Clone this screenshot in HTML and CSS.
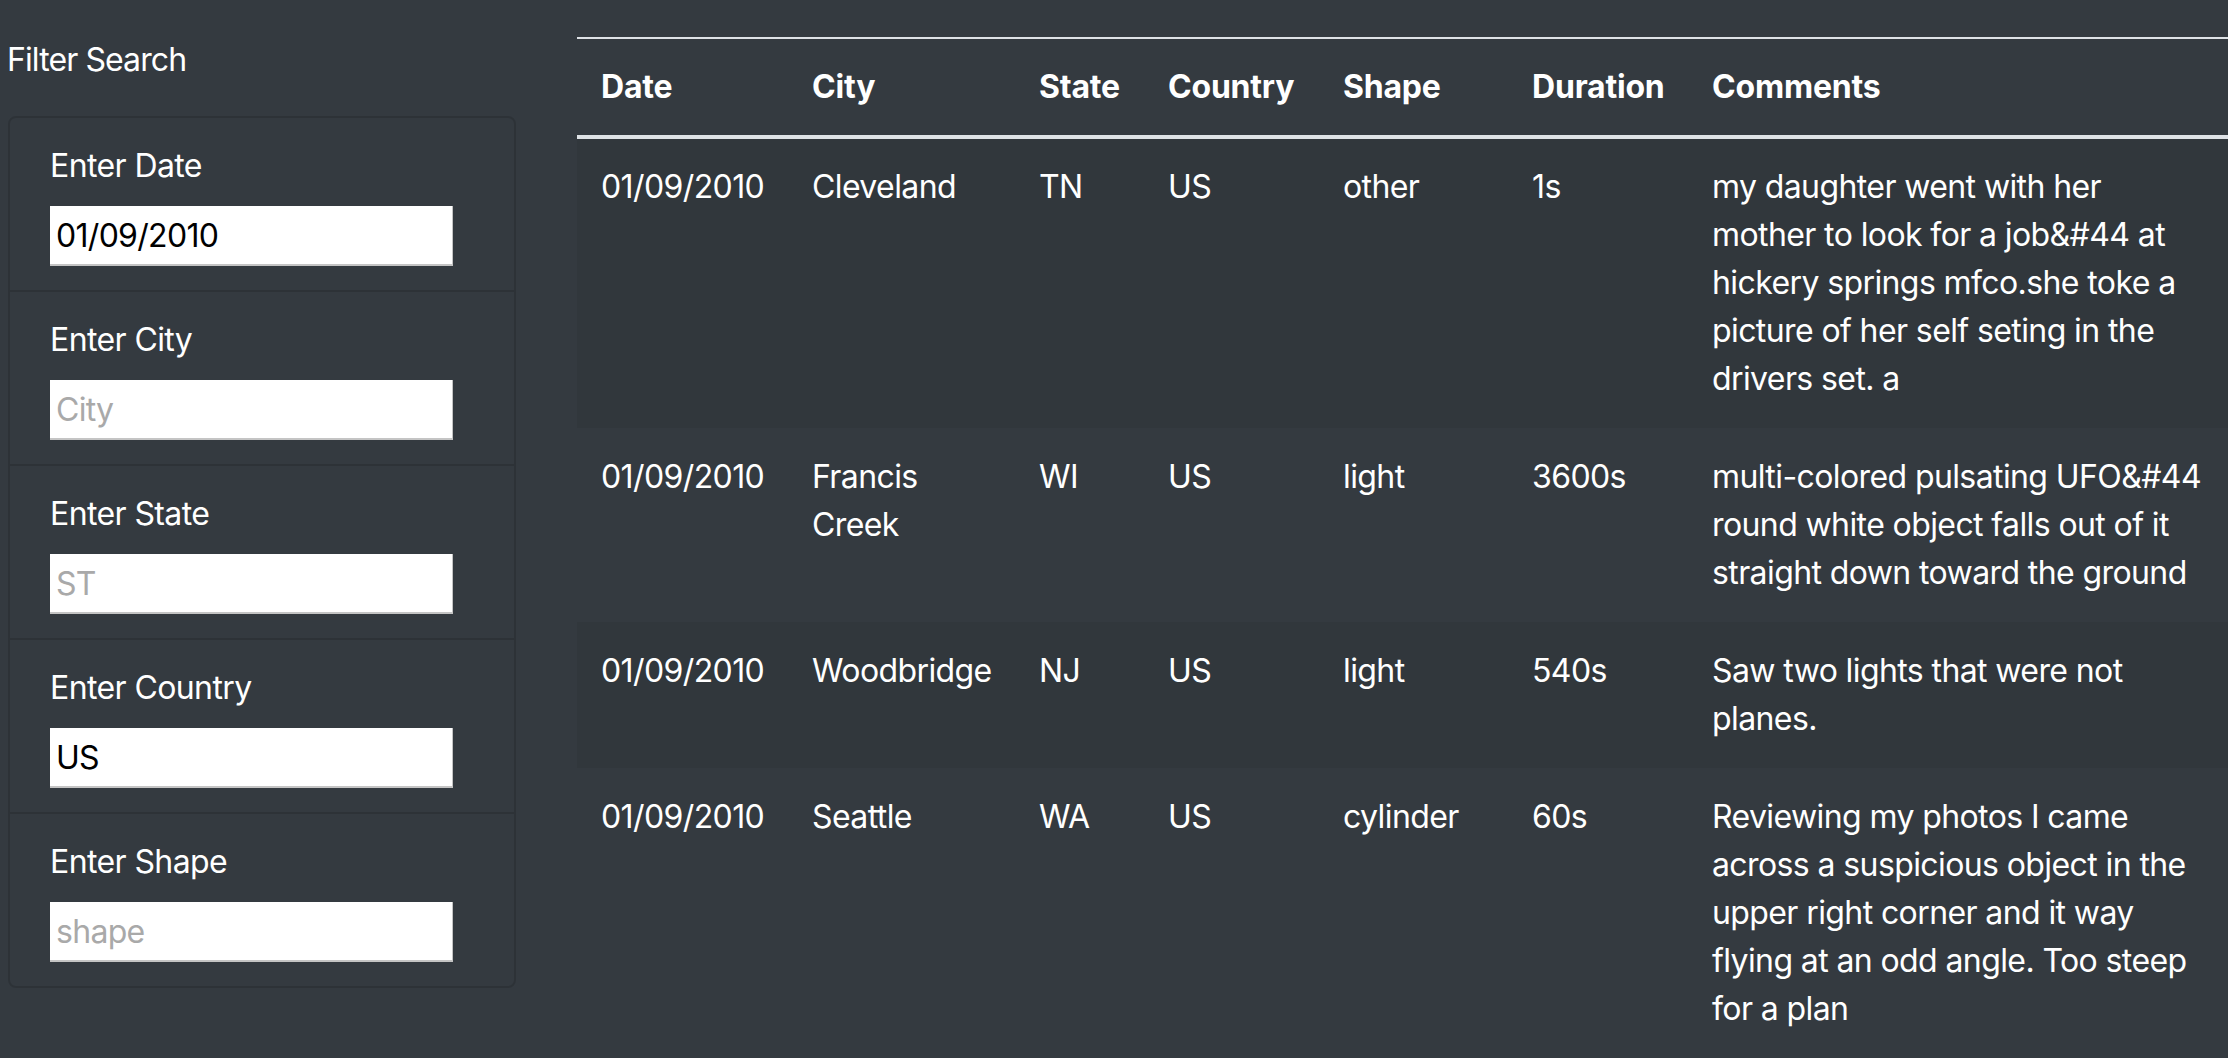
FILE: index.html
```html
<!DOCTYPE html>
<html lang="en">
<head>
<meta charset="utf-8">
<title>UFO Sightings</title>
<link rel="stylesheet" href="styles.css">
</head>
<body>
<div class="layout">
  <aside class="sidebar">
    <h5 class="filter-title">Filter Search</h5>
    <ul class="filters">
      <li class="filter-item">
        <label class="filter-label" for="datetime">Enter Date</label>
        <input class="filter-input" id="datetime" type="text" value="01/09/2010">
      </li>
      <li class="filter-item">
        <label class="filter-label" for="city">Enter City</label>
        <input class="filter-input" id="city" type="text" placeholder="City">
      </li>
      <li class="filter-item">
        <label class="filter-label" for="state">Enter State</label>
        <input class="filter-input" id="state" type="text" placeholder="ST">
      </li>
      <li class="filter-item">
        <label class="filter-label" for="country">Enter Country</label>
        <input class="filter-input" id="country" type="text" value="US">
      </li>
      <li class="filter-item">
        <label class="filter-label" for="shape">Enter Shape</label>
        <input class="filter-input" id="shape" type="text" placeholder="shape">
      </li>
    </ul>
  </aside>
  <main class="content">
    <table class="ufo-table">
      <colgroup>
        <col class="c-date">
        <col class="c-city">
        <col class="c-state">
        <col class="c-country">
        <col class="c-shape">
        <col class="c-duration">
        <col class="c-comments">
      </colgroup>
      <thead>
        <tr>
          <th>Date</th>
          <th>City</th>
          <th>State</th>
          <th>Country</th>
          <th>Shape</th>
          <th>Duration</th>
          <th>Comments</th>
        </tr>
      </thead>
      <tbody>
        <tr>
          <td>01/09/2010</td>
          <td>Cleveland</td>
          <td>TN</td>
          <td>US</td>
          <td>other</td>
          <td>1s</td>
          <td>my daughter went with her mother to look for a job&amp;#44 at hickery springs mfco.she toke a picture of her self seting in the drivers set. a</td>
        </tr>
        <tr>
          <td>01/09/2010</td>
          <td>Francis Creek</td>
          <td>WI</td>
          <td>US</td>
          <td>light</td>
          <td>3600s</td>
          <td>multi-colored pulsating UFO&amp;#44 round white object falls out of it straight down toward the ground</td>
        </tr>
        <tr>
          <td>01/09/2010</td>
          <td>Woodbridge</td>
          <td>NJ</td>
          <td>US</td>
          <td>light</td>
          <td>540s</td>
          <td>Saw two lights that were not planes.</td>
        </tr>
        <tr>
          <td>01/09/2010</td>
          <td>Seattle</td>
          <td>WA</td>
          <td>US</td>
          <td>cylinder</td>
          <td>60s</td>
          <td>Reviewing my photos I came across a suspicious object in the upper right corner and it way flying at an odd angle. Too steep for a plan</td>
        </tr>
      </tbody>
    </table>
  </main>
</div>
</body>
</html>
```

FILE: styles.css
```css
html, body {
  margin: 0;
  padding: 0;
}

body {
  background: #343a40;
  color: #fff;
  font-family: Inter, "Noto Sans", "Liberation Sans", sans-serif;
  font-size: 32px;
  line-height: 48px;
  letter-spacing: -0.6px;
  overflow: hidden;
}

.layout {
  display: flex;
  align-items: flex-start;
}

.sidebar {
  flex: 0 0 577px;
  box-sizing: border-box;
  padding-left: 8px;
}

.filter-title {
  margin: 36px 0 32px -1px;
  font-size: 32px;
  font-weight: 400;
  line-height: 48px;
  letter-spacing: -0.9px;
}

.filters {
  list-style: none;
  margin: 0;
  padding: 0;
  width: 508px;
  box-sizing: border-box;
  border: 2px solid rgba(0, 0, 0, 0.13);
  border-radius: 8px;
}

.filter-item {
  display: flex;
  flex-direction: column;
  align-items: flex-start;
  padding: 24px 40px;
  border-top: 2px solid rgba(0, 0, 0, 0.13);
}

.filter-item:first-child {
  border-top: 0;
}

.filter-label {
  display: block;
  margin-bottom: 16px;
  line-height: 48px;
}

.filter-input {
  box-sizing: border-box;
  width: 403px;
  height: 60px;
  margin: 0;
  padding: 0 6px;
  border-style: solid;
  border-width: 0 1px 2px 0;
  border-color: #c4c4c4;
  border-radius: 0;
  background: #fff;
  color: #000;
  font-family: Inter, "Noto Sans", "Liberation Sans", sans-serif;
  font-size: 32px;
  letter-spacing: -0.7px;
  outline: none;
}

.filter-input::placeholder {
  color: #a9a9a9;
}

.content {
  flex: 1 1 auto;
  min-width: 0;
}

.ufo-table {
  width: 100%;
  table-layout: fixed;
  border-collapse: collapse;
  margin-top: 37px;
}

.c-date { width: 211px; }
.c-city { width: 227px; }
.c-state { width: 129px; }
.c-country { width: 175px; }
.c-shape { width: 189px; }
.c-duration { width: 180px; }
.c-comments { width: 540px; }

.ufo-table th,
.ufo-table td {
  padding: 24px;
  text-align: left;
  vertical-align: top;
  line-height: 48px;
}

.ufo-table th {
  font-weight: 700;
  letter-spacing: -0.2px;
  border-top: 2px solid #dee2e6;
  border-bottom: 4px solid #dee2e6;
}

.ufo-table td {
  border-top: 2px solid transparent;
}

.ufo-table tbody tr:nth-child(odd) {
  background: rgba(0, 0, 0, 0.05);
}
```
